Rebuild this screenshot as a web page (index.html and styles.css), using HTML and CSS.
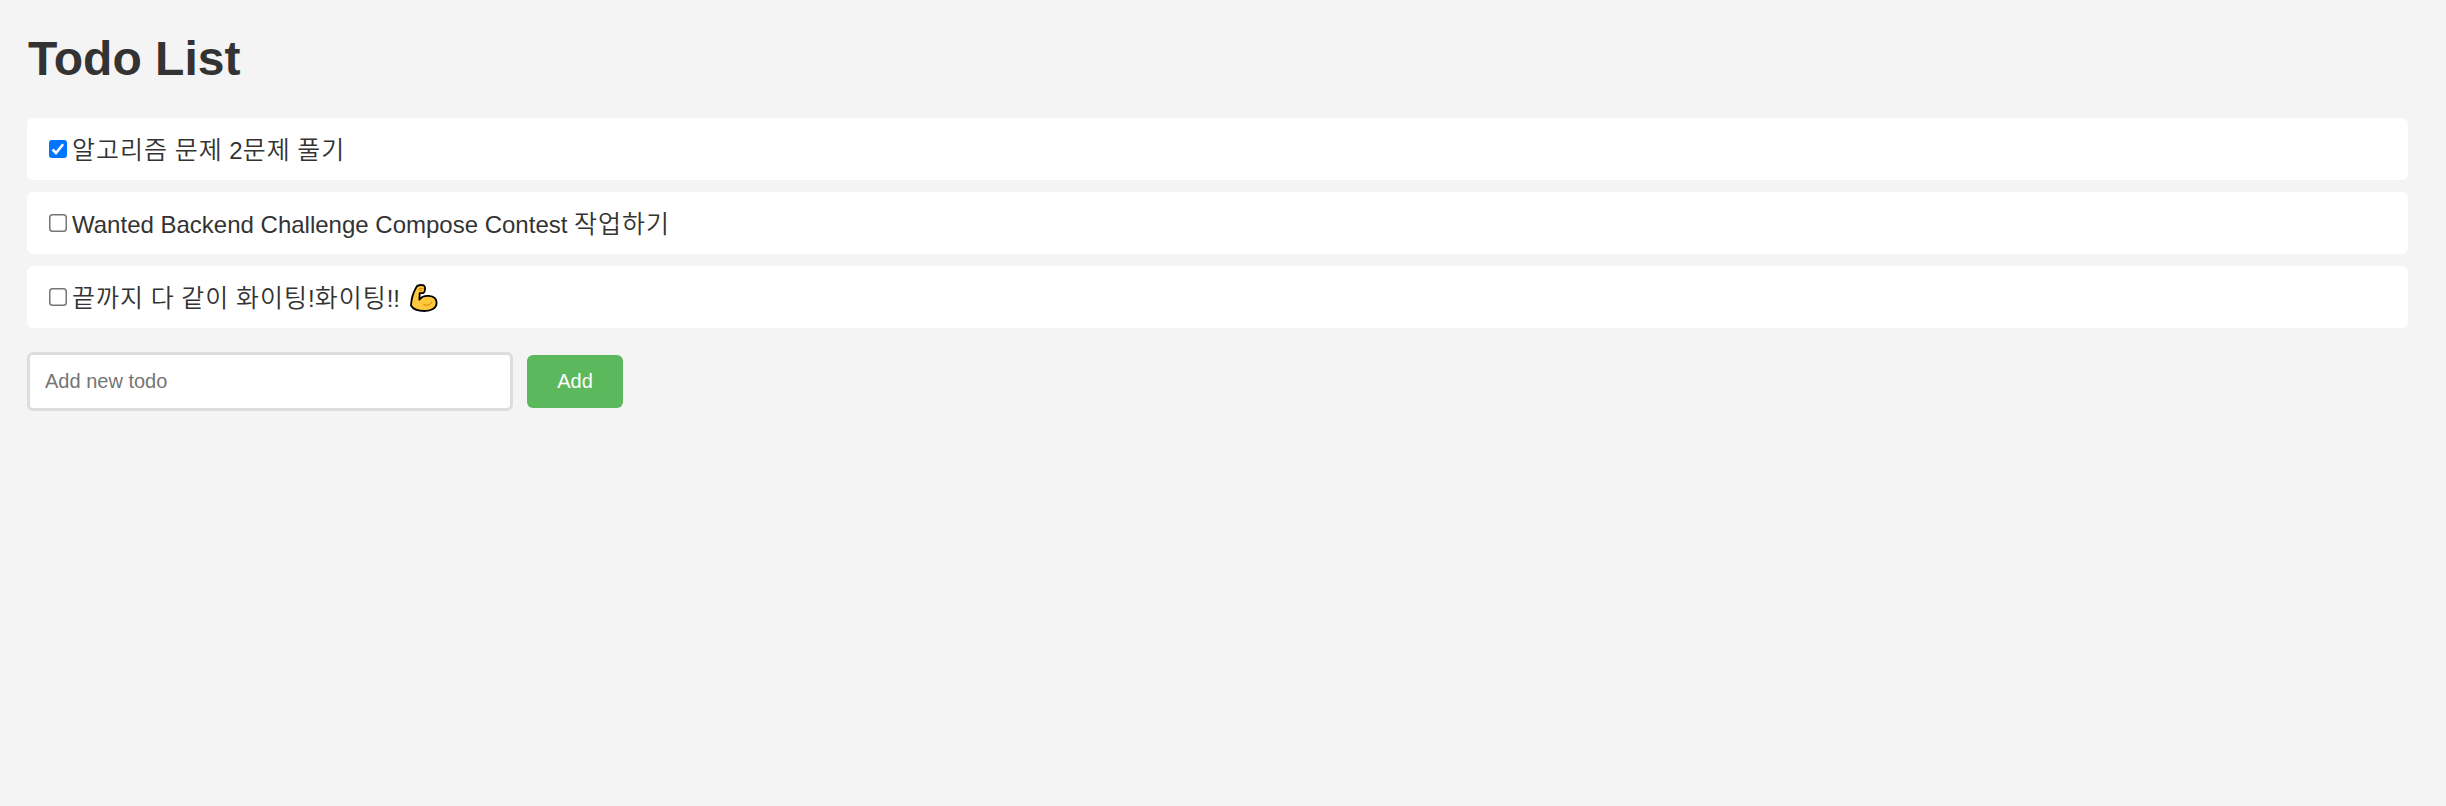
FILE: index.html
```html
<!DOCTYPE html>
<html lang="ko">
<head>
<meta charset="utf-8">
<title>Todo List</title>
<link rel="stylesheet" href="styles.css">
</head>
<body>
<h1 class="title">Todo List</h1>
<ul class="todos">
  <li class="todo">
    <svg class="check" viewBox="0 0 18 18"><rect width="18" height="18" rx="3" fill="#0075ff"/><path d="M3.6 9.5 7 13 14.1 4.2" fill="none" stroke="#fff" stroke-width="2.6"/></svg>
    <span class="label"><span class="ko">알고리즘 문제</span> 2<span class="ko">문제 풀기</span></span>
  </li>
  <li class="todo">
    <svg class="check" viewBox="0 0 18 18"><rect x=".75" y=".75" width="16.5" height="16.5" rx="2.8" fill="#fff" stroke="#767676" stroke-width="1.5"/></svg>
    <span class="label">Wanted Backend Challenge Compose Contest <span class="ko">작업하기</span></span>
  </li>
  <li class="todo">
    <svg class="check" viewBox="0 0 18 18"><rect x=".75" y=".75" width="16.5" height="16.5" rx="2.8" fill="#fff" stroke="#767676" stroke-width="1.5"/></svg>
    <span class="label"><span class="ko">끝까지 다 같이 화이팅</span>!<span class="ko">화이팅</span>!!</span>
    <svg class="muscle" viewBox="0 0 28 28"><path d="M6.3 3.2C7.2 1.3 9 .9 11.500 1c2.700 0 3.800 1.200 3.500 4.200-.1 2.600-.8 3.900-2.700 3.900H9.700l-.3 6.500c2.300-3 5.600-4 9.300-3.700 5.100.4 8 3.300 7.900 7.300-.2 5-5.500 7.800-12.100 7.800C8.500 27 3 25.200 1 21.500c.3-6.500 2.500-13.500 5.300-18.300z" fill="#ffc83d" stroke="#000" stroke-width="1.8" stroke-linejoin="round"/><path d="M8.500 5.200c2-1.200 3.500-.9 5.300-.2M9.400 6.400h2.200M13.500 20.700c4 1.100 7.500.2 8.100-3.200" fill="none" stroke="#d67d00" stroke-width="1"/></svg>
  </li>
</ul>
<form class="add-form">
  <input class="add-input" type="text" placeholder="Add new todo">
  <button class="add-button" type="button">Add</button>
</form>
</body>
</html>
```
FILE: styles.css
```css
* { box-sizing: border-box; }
body {
  margin: 0;
  padding: 31px 38px 0 27px;
  background: #f4f4f4;
  color: #333;
  font-family: "Liberation Sans", "Noto Sans CJK KR", sans-serif;
}
.title {
  margin: 0 0 32px;
  padding-left: 1px;
  font-size: 48px;
  line-height: 55px;
}
.todos {
  display: flex;
  flex-direction: column;
  gap: 12px;
  margin: 0 0 24px;
  padding: 0;
  list-style: none;
}
.todo {
  display: flex;
  align-items: flex-start;
  height: 62px;
  padding: 18px 22px;
  border-radius: 6px;
  background: #fff;
  font-size: 24px;
  line-height: 30px;
}
.check {
  flex: none;
  width: 18px;
  height: 18px;
  margin: 4px 5px 0 0;
}
.label { white-space: nowrap; }
.ko {
  font-size: 25px;
  font-weight: 350;
  line-height: 1;
  letter-spacing: 1px;
  word-spacing: -1.3px;
}
.muscle {
  flex: none;
  width: 28px;
  height: 28px;
  margin-left: 10px;
}
.add-form {
  display: flex;
  align-items: center;
  gap: 14px;
}
.add-input {
  width: 486px;
  height: 59px;
  padding: 0 15px;
  border: 3px solid #ddd;
  border-radius: 6px;
  background: #fff;
  font: 20px "Liberation Sans", sans-serif;
}
.add-input::placeholder { color: #757575; }
.add-button {
  width: 96px;
  height: 53px;
  padding: 0;
  border: 0;
  border-radius: 6px;
  background: #5cb85c;
  color: #fff;
  font: 20px "Liberation Sans", sans-serif;
}
```
